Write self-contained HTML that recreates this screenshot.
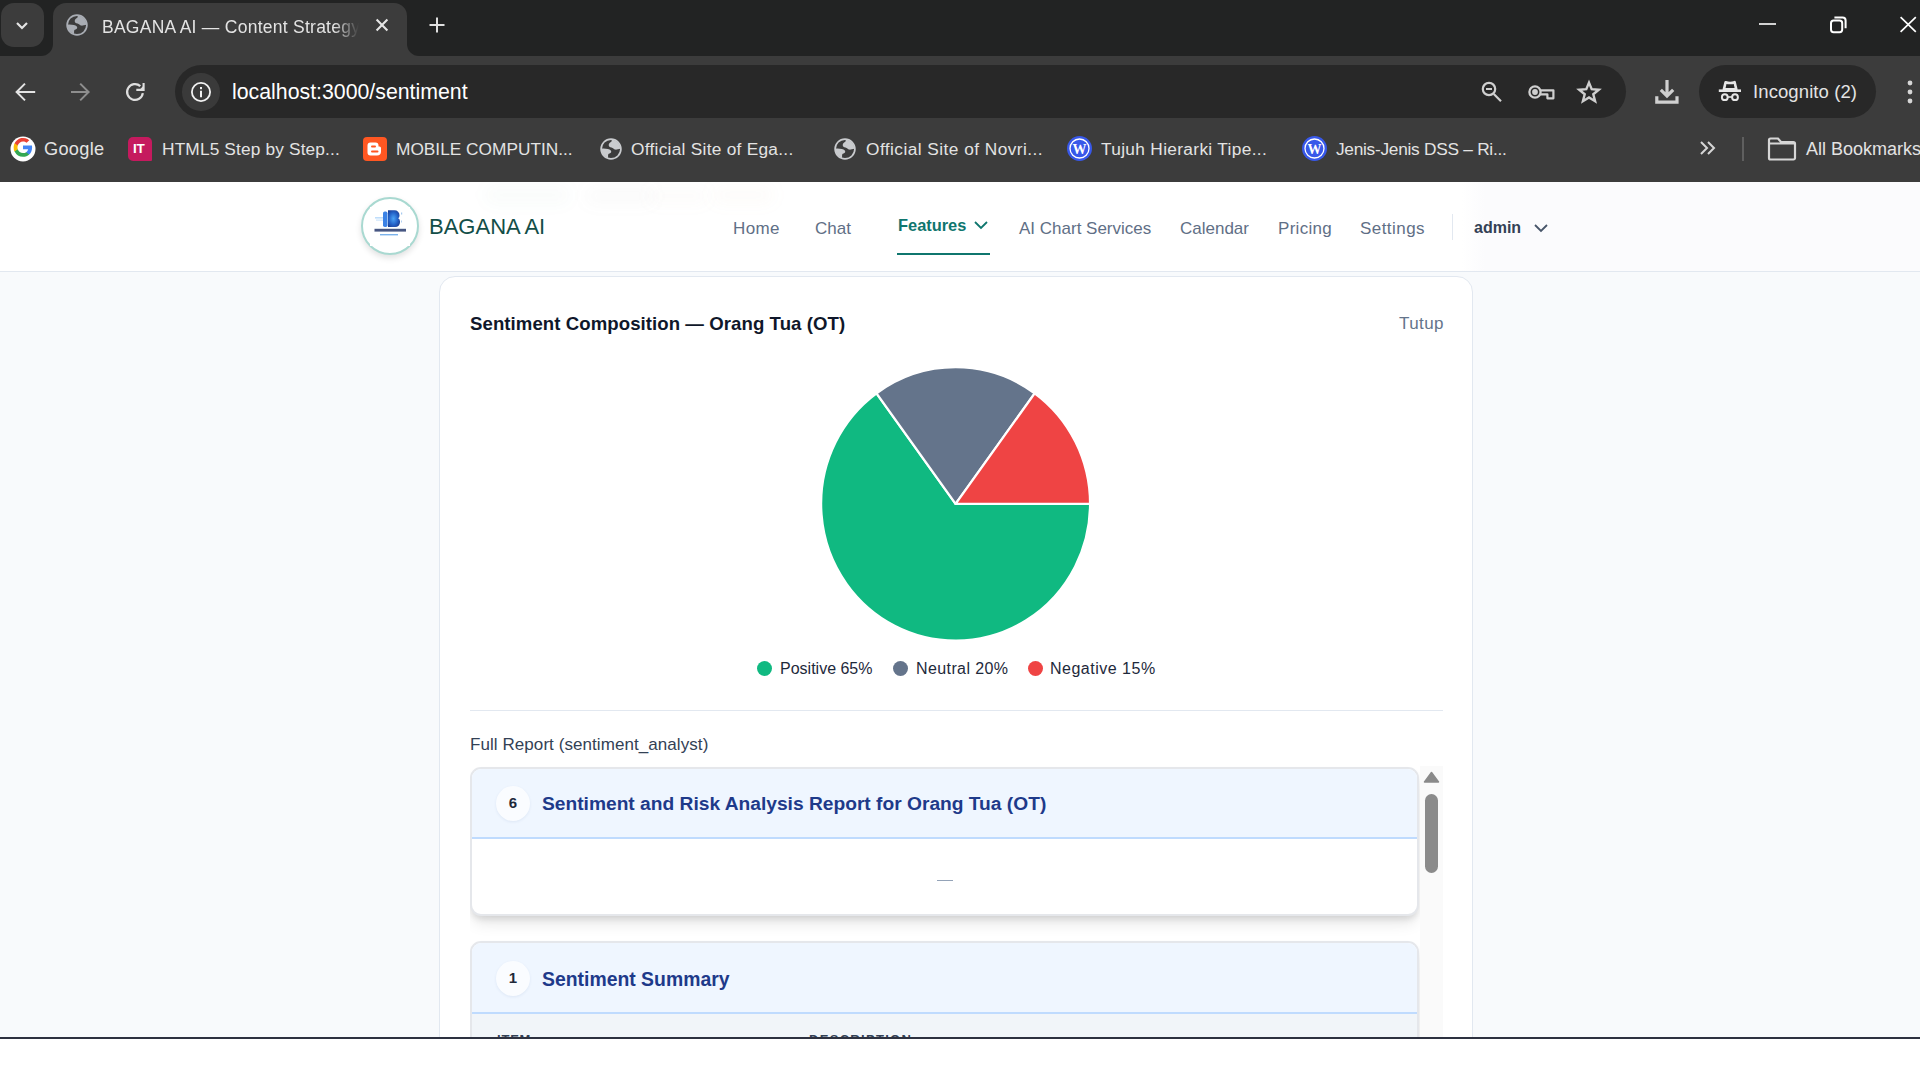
<!DOCTYPE html>
<html><head><meta charset="utf-8">
<style>
*{box-sizing:border-box;margin:0;padding:0}
html,body{width:1920px;height:1080px;overflow:hidden;background:#fff;font-family:"Liberation Sans",sans-serif}
.abs{position:absolute}
.nw{white-space:nowrap}
#frame{position:absolute;left:0;top:0;width:1920px;height:56px;background:#222323}
#toolbar{position:absolute;left:0;top:56px;width:1920px;height:126px;background:#3c3c3c}
.ct{color:#e3e3e3}
#page{position:absolute;left:0;top:182px;width:1920px;height:855px;background:#f8fafc;overflow:hidden}
</style></head><body>

<!-- ============ CHROME TAB STRIP ============ -->
<div id="frame"></div>
<div class="abs" style="left:1px;top:3px;width:43px;height:44px;border-radius:13px;background:#3c3c3c"></div>
<svg class="abs" style="left:12px;top:15px" width="20" height="20" viewBox="0 0 20 20"><path d="M5 8 L10 13 L15 8" fill="none" stroke="#e3e3e3" stroke-width="2.2"/></svg>

<!-- active tab -->
<div class="abs" style="left:53px;top:3px;width:354px;height:53px;border-radius:13px 13px 0 0;background:#3c3c3c"></div>
<div class="abs" style="left:41px;top:44px;width:12px;height:12px;background:#3c3c3c"></div>
<div class="abs" style="left:41px;top:44px;width:12px;height:12px;background:#222323;border-bottom-right-radius:12px"></div>
<div class="abs" style="left:407px;top:44px;width:12px;height:12px;background:#3c3c3c"></div>
<div class="abs" style="left:407px;top:44px;width:12px;height:12px;background:#222323;border-bottom-left-radius:12px"></div>

<svg class="abs" style="left:66px;top:14px" width="22" height="22" viewBox="0 0 22 22"><defs><clipPath id="gc1"><circle cx="11" cy="11" r="9.6"/></clipPath></defs><circle cx="11" cy="11" r="9.9" fill="none" stroke="#a9adb4" stroke-width="1.7"/><g clip-path="url(#gc1)" fill="#a9adb4"><path d="M11.7 0 L11.7 3.2 C10 4.5 8.7 5.5 8.7 6.9 C8.7 8.3 9.8 9.2 11.5 9.6 C13.2 10 13.6 11.4 15.3 11.6 C16.8 11.8 18.5 10.8 22 10.3 L22 0 Z"/><path d="M0 10.6 C3.5 10.6 7.5 10.8 9.5 11.5 C11 12.1 11.5 13.3 11 14.4 C10.5 15.3 8.6 15.2 8.2 16.5 C8 17.5 8.1 19 8.1 22 L0 22 Z"/></g></svg>
<div class="abs nw ct" style="left:102px;top:16px;font-size:17.5px;line-height:22px;letter-spacing:.26px;width:262px;overflow:hidden;-webkit-mask-image:linear-gradient(90deg,#000 232px,transparent 257px)">BAGANA AI — Content Strategy Hub</div>
<svg class="abs" style="left:374px;top:17px" width="16" height="16" viewBox="0 0 16 16"><path d="M2.6 2.6 L13.4 13.4 M13.4 2.6 L2.6 13.4" stroke="#e6e6e6" stroke-width="2.1"/></svg>
<svg class="abs" style="left:428px;top:16px" width="18" height="18" viewBox="0 0 18 18"><path d="M9 1.5 V16.5 M1.5 9 H16.5" stroke="#e0e0e0" stroke-width="2"/></svg>

<!-- window controls -->
<svg class="abs" style="left:1758px;top:14px" width="20" height="20" viewBox="0 0 20 20"><path d="M1 10 H18" stroke="#fff" stroke-width="1.6"/></svg>
<svg class="abs" style="left:1828px;top:14px" width="20" height="20" viewBox="0 0 20 20"><rect x="3" y="6.6" width="11.2" height="11.6" rx="2.6" fill="none" stroke="#fff" stroke-width="2"/><path d="M6.4 3.6 H14.6 a3 3 0 0 1 3 3 V14.2" fill="none" stroke="#fff" stroke-width="2"/></svg>
<svg class="abs" style="left:1898px;top:14px" width="20" height="20" viewBox="0 0 20 20"><path d="M2.6 3.2 L17.8 17.8 M17.8 3.2 L2.6 17.8" stroke="#fff" stroke-width="1.7"/></svg>

<!-- ============ TOOLBAR ============ -->
<div id="toolbar"></div>
<svg class="abs" style="left:13px;top:80px" width="24" height="24" viewBox="0 0 24 24"><path d="M22.2 12 H4.5 M12 3.6 L3.6 12 L12 20.4" fill="none" stroke="#e3e3e3" stroke-width="2"/></svg>
<svg class="abs" style="left:68px;top:80px" width="24" height="24" viewBox="0 0 24 24"><path d="M3 12 H20 M12.2 3.6 L20.6 12 L12.2 20.4" fill="none" stroke="#8e8e8e" stroke-width="2"/></svg>
<svg class="abs" style="left:123px;top:80px" width="24" height="24" viewBox="0 0 24 24"><path d="M17.29 6.13 A7.9 7.9 0 1 0 19.82 13.10" fill="none" stroke="#dedede" stroke-width="2.2"/><path d="M13.3 9.85 H20.6 V2.9" fill="none" stroke="#dedede" stroke-width="2.1"/><path d="M16.5 9.9 H20.6 V5.6 Z" fill="#dedede"/></svg>

<div class="abs" style="left:175px;top:65px;width:1451px;height:53px;border-radius:27px;background:#282828"></div>
<div class="abs" style="left:182px;top:73px;width:37.5px;height:37.5px;border-radius:50%;background:#3a3a3a"></div>
<svg class="abs" style="left:190px;top:81px" width="22" height="22" viewBox="0 0 22 22"><circle cx="11" cy="11" r="9.1" fill="none" stroke="#f2f2f2" stroke-width="1.8"/><path d="M11 9.8 V16.2" stroke="#f2f2f2" stroke-width="2"/><rect x="10" y="6" width="2" height="2.2" fill="#f2f2f2"/></svg>
<div class="abs nw" style="left:232px;top:79px;font-size:21.3px;line-height:26px;color:#fff">localhost:3000/sentiment</div>

<svg class="abs" style="left:1478px;top:79px" width="26" height="26" viewBox="0 0 26 26"><circle cx="11" cy="10" r="6.2" fill="none" stroke="#cfcfcf" stroke-width="2.2"/><path d="M8 10 H14 M15.8 15 L23 22.3" stroke="#cfcfcf" stroke-width="2.2"/></svg>
<svg class="abs" style="left:1527px;top:82px" width="30" height="20" viewBox="0 0 30 20"><circle cx="8" cy="10" r="5.6" fill="none" stroke="#cfcfcf" stroke-width="2.3"/><circle cx="8" cy="10" r="2.9" fill="#cfcfcf"/><path d="M13.6 8.3 H26.4 V16.3 H20.4 V12.3 H13.6" fill="none" stroke="#cfcfcf" stroke-width="2.2" stroke-linejoin="round"/></svg>
<svg class="abs" style="left:1576px;top:79px" width="26" height="26" viewBox="0 0 26 26"><path d="M13 3.6 L15.7 10.2 L22.8 10.7 L17.3 15.2 L19.1 22.2 L13 18.4 L6.9 22.2 L8.7 15.2 L3.2 10.7 L10.3 10.2 Z" fill="none" stroke="#cfcfcf" stroke-width="2.4" stroke-linejoin="miter"/></svg>

<svg class="abs" style="left:1654px;top:79px" width="26" height="26" viewBox="0 0 26 26"><path d="M13 1 V16.5 M6.8 10.8 L13 17 L19.2 10.8 M2.8 17.2 V23.2 H23 V17.2" fill="none" stroke="#d0d0d0" stroke-width="3.2"/></svg>

<div class="abs" style="left:1699px;top:65px;width:177px;height:53px;border-radius:27px;background:#282828"></div>
<svg class="abs" style="left:1717px;top:80px" width="26" height="24" viewBox="0 0 26 24"><path d="M8.6 2.2 Q13 3.8 17.6 2.2 L19.3 9.4 H6.9 Z" fill="none" stroke="#e6e6e6" stroke-width="2.6" stroke-linejoin="round"/><path d="M1.8 10.7 H24" stroke="#e6e6e6" stroke-width="2.6"/><circle cx="7.8" cy="17.2" r="2.9" fill="none" stroke="#e6e6e6" stroke-width="2"/><circle cx="18" cy="17.2" r="2.9" fill="none" stroke="#e6e6e6" stroke-width="2"/><path d="M10.7 17 H15.1" stroke="#e6e6e6" stroke-width="1.6"/></svg>
<div class="abs nw" style="left:1753px;top:80px;font-size:18.5px;line-height:24px;color:#e3e3e3;letter-spacing:.1px">Incognito (2)</div>
<svg class="abs" style="left:1903px;top:79px" width="14" height="26" viewBox="0 0 14 26"><circle cx="7" cy="4" r="2.4" fill="#d6d6d6"/><circle cx="7" cy="13" r="2.4" fill="#d6d6d6"/><circle cx="7" cy="22" r="2.4" fill="#d6d6d6"/></svg>

<!-- ============ BOOKMARKS ============ -->
<div id="bm">
<svg class="abs" style="left:9.5px;top:136px" width="26" height="26" viewBox="0 0 26 26"><circle cx="13" cy="13" r="12.5" fill="#fff"/><g transform="translate(13 13) scale(1.38) translate(-13 -14.3)">
<path d="M19.6 13.2 c0-.5-.05-1-.13-1.4 H13 v2.7 h3.7 a3.2 3.2 0 0 1-1.4 2.1 v1.7 h2.2 c1.3-1.2 2.1-3 2.1-5.1z" fill="#4285F4"/>
<path d="M13 20 c1.85 0 3.4-.6 4.5-1.7 l-2.2-1.7 c-.6.4-1.4.65-2.3.65 -1.8 0-3.3-1.2-3.8-2.8 H6.9 v1.75 A6.9 6.9 0 0 0 13 20z" fill="#34A853"/>
<path d="M9.2 14.45 a4.1 4.1 0 0 1 0-2.6 V10.1 H6.9 a6.9 6.9 0 0 0 0 6.1z" fill="#FBBC05"/>
<path d="M13 8.85 c1 0 1.9.35 2.6 1 l1.95-1.95 A6.9 6.9 0 0 0 6.9 10.1 l2.3 1.75 C9.7 10.1 11.2 8.85 13 8.85z" fill="#EA4335"/></g></svg>
<div class="abs nw ct" style="left:44px;top:138px;font-size:18.2px;letter-spacing:.3px;line-height:22px">Google</div>

<div class="abs" style="left:128px;top:137px;width:24px;height:24px;border-radius:5px 5px 1px 5px;background:#c51a5e"></div>
<div class="abs nw" style="left:133px;top:142px;font-size:13.5px;line-height:14px;font-weight:700;color:#fff;letter-spacing:-.3px">IT</div>
<div class="abs nw ct" style="left:162px;top:138px;font-size:17.3px;letter-spacing:.15px;line-height:22px">HTML5 Step by Step...</div>

<div class="abs" style="left:363px;top:137px;width:24px;height:24px;border-radius:4px;background:#ff5722"></div>
<svg class="abs" style="left:363px;top:137px" width="24" height="24" viewBox="0 0 24 24"><path d="M7.5 5.5 h5 a3 3 0 0 1 3 3 v1 h1 a1.5 1.5 0 0 1 1.5 1.5 v3.5 a4 4 0 0 1-4 4 h-6.5 a3 3 0 0 1-3-3 v-7 a3 3 0 0 1 3-3z" fill="#fff"/><rect x="8" y="8.5" width="5" height="2" rx="1" fill="#ff5722"/><rect x="8" y="13.5" width="7.5" height="2" rx="1" fill="#ff5722"/></svg>
<div class="abs nw ct" style="left:396px;top:138px;font-size:17.3px;line-height:22px">MOBILE COMPUTIN...</div>

<svg class="abs" style="left:599.5px;top:138px" width="22" height="22" viewBox="0 0 22 22"><defs><clipPath id="gc2"><circle cx="11" cy="11" r="9.6"/></clipPath></defs><circle cx="11" cy="11" r="9.9" fill="none" stroke="#c9cbce" stroke-width="1.7"/><g clip-path="url(#gc2)" fill="#c9cbce"><path d="M11.7 0 L11.7 3.2 C10 4.5 8.7 5.5 8.7 6.9 C8.7 8.3 9.8 9.2 11.5 9.6 C13.2 10 13.6 11.4 15.3 11.6 C16.8 11.8 18.5 10.8 22 10.3 L22 0 Z"/><path d="M0 10.6 C3.5 10.6 7.5 10.8 9.5 11.5 C11 12.1 11.5 13.3 11 14.4 C10.5 15.3 8.6 15.2 8.2 16.5 C8 17.5 8.1 19 8.1 22 L0 22 Z"/></g></svg>
<div class="abs nw ct" style="left:631px;top:138px;font-size:17.3px;letter-spacing:.27px;line-height:22px">Official Site of Ega...</div>

<svg class="abs" style="left:833.5px;top:138px" width="22" height="22" viewBox="0 0 22 22"><defs><clipPath id="gc3"><circle cx="11" cy="11" r="9.6"/></clipPath></defs><circle cx="11" cy="11" r="9.9" fill="none" stroke="#c9cbce" stroke-width="1.7"/><g clip-path="url(#gc3)" fill="#c9cbce"><path d="M11.7 0 L11.7 3.2 C10 4.5 8.7 5.5 8.7 6.9 C8.7 8.3 9.8 9.2 11.5 9.6 C13.2 10 13.6 11.4 15.3 11.6 C16.8 11.8 18.5 10.8 22 10.3 L22 0 Z"/><path d="M0 10.6 C3.5 10.6 7.5 10.8 9.5 11.5 C11 12.1 11.5 13.3 11 14.4 C10.5 15.3 8.6 15.2 8.2 16.5 C8 17.5 8.1 19 8.1 22 L0 22 Z"/></g></svg>
<div class="abs nw ct" style="left:866px;top:138px;font-size:17.3px;letter-spacing:.45px;line-height:22px">Official Site of Novri...</div>

<svg class="abs" style="left:1067px;top:136px" width="25" height="25" viewBox="0 0 25 25"><circle cx="12.5" cy="12.5" r="12.5" fill="#3858e9"/><circle cx="12.5" cy="12.5" r="9.5" fill="none" stroke="#fff" stroke-width="1.3"/><text x="12.5" y="17.5" text-anchor="middle" font-family="Liberation Serif" font-weight="700" font-size="14" fill="#fff">W</text></svg>
<div class="abs nw ct" style="left:1101px;top:138px;font-size:17.3px;letter-spacing:.33px;line-height:22px">Tujuh Hierarki Tipe...</div>

<svg class="abs" style="left:1302px;top:136px" width="25" height="25" viewBox="0 0 25 25"><circle cx="12.5" cy="12.5" r="12.5" fill="#3858e9"/><circle cx="12.5" cy="12.5" r="9.5" fill="none" stroke="#fff" stroke-width="1.3"/><text x="12.5" y="17.5" text-anchor="middle" font-family="Liberation Serif" font-weight="700" font-size="14" fill="#fff">W</text></svg>
<div class="abs nw ct" style="left:1336px;top:138px;font-size:17.3px;letter-spacing:-.27px;line-height:22px">Jenis-Jenis DSS – Ri...</div>

<svg class="abs" style="left:1699px;top:140px" width="18" height="16" viewBox="0 0 18 16"><path d="M2 2 L8 8 L2 14 M9 2 L15 8 L9 14" fill="none" stroke="#d6d6d6" stroke-width="2"/></svg>
<div class="abs" style="left:1742px;top:137px;width:2px;height:24px;background:#5f5f5f"></div>
<svg class="abs" style="left:1767px;top:137px" width="30" height="24" viewBox="0 0 30 24"><path d="M2 3 a1.5 1.5 0 0 1 1.5-1.5 H11 L14 5 H26.5 a1.5 1.5 0 0 1 1.5 1.5 V21 a1.5 1.5 0 0 1-1.5 1.5 H3.5 A1.5 1.5 0 0 1 2 21 Z M2 6.5 H28" fill="none" stroke="#d6d6d6" stroke-width="2.2"/></svg>
<div class="abs nw ct" style="left:1806px;top:138px;font-size:18px;line-height:22px">All Bookmarks</div>
</div>

<!-- ============ PAGE ============ -->
<div id="page">
<!-- header -->
<div class="abs" style="left:0;top:0;width:1920px;height:90px;background:linear-gradient(90deg,#fff 0,#fff 1462px,#fbfbfd 1485px,#fbfbfd 100%);border-bottom:1px solid #e2e8f0"></div>
<div class="abs" style="left:485px;top:5px;width:85px;height:16px;border-radius:8px;background:rgba(16,120,100,.03);filter:blur(8px)"></div>
<div class="abs" style="left:585px;top:6px;width:70px;height:16px;border-radius:8px;background:rgba(100,120,110,.035);filter:blur(8px)"></div>
<div class="abs" style="left:648px;top:7px;width:60px;height:14px;border-radius:8px;background:rgba(180,140,110,.035);filter:blur(8px)"></div>
<div class="abs" style="left:712px;top:5px;width:62px;height:16px;border-radius:8px;background:rgba(210,150,100,.04);filter:blur(8px)"></div>
<div class="abs" style="left:361px;top:15px;width:58px;height:58px;border-radius:50%;background:#fff;border:2px solid #a9d9d1;box-shadow:0 3px 6px rgba(0,0,0,.12)"></div>
<div class="abs" style="left:370px;top:25px;width:40px;height:39px;background:#fff"></div>
<svg class="abs" style="left:370px;top:25px" width="40" height="40" viewBox="0 0 40 40">
<defs><radialGradient id="lg" cx="45%" cy="50%" r="60%"><stop offset="0" stop-color="#4aa3f5"/><stop offset=".6" stop-color="#2563c9"/><stop offset="1" stop-color="#1d3f94"/></radialGradient>
<filter id="lb" x="-20%" y="-20%" width="140%" height="140%"><feGaussianBlur stdDeviation=".45"/></filter></defs>
<g filter="url(#lb)">
<rect x="5" y="10" width="8" height="1.6" fill="#8cc3f7" opacity=".55"/>
<rect x="6" y="12.5" width="7" height="1.2" fill="#8cc3f7" opacity=".45"/>
<rect x="13" y="4.5" width="4.5" height="15.5" rx="1.8" fill="#3b82e6"/>
<path d="M18 3.2 h6.5 a5 5 0 0 1 5 5 v.5 a3.2 3.2 0 0 1 -1.3 2.6 a3.6 3.6 0 0 1 1.8 3.2 v.8 a4.8 4.8 0 0 1 -4.8 4.8 h-7.2z" fill="url(#lg)"/>
<rect x="31" y="5.5" width="1.2" height="2" fill="#7fb3ea" opacity=".7"/>
<rect x="31" y="13.5" width="1" height="2" fill="#7fb3ea" opacity=".6"/>
<rect x="4.5" y="21.8" width="31.5" height="2.8" fill="#172a63" opacity=".8"/>
<rect x="10" y="27" width="18" height="1.4" fill="#5b9fe6" opacity=".8"/>
</g></svg>
<div class="abs nw" style="left:429px;top:31px;font-size:22px;line-height:28px;color:#134e48">BAGANA AI</div>

<div class="abs nw" style="left:733px;top:35.5px;font-size:17px;line-height:22px;color:#5f6f86;letter-spacing:.4px">Home</div>
<div class="abs nw" style="left:815px;top:35.5px;font-size:17px;line-height:22px;color:#5f6f86">Chat</div>
<div class="abs nw" style="left:898px;top:32px;font-size:16.4px;line-height:22px;color:#0f766e;font-weight:700">Features</div>
<svg class="abs" style="left:973px;top:37px" width="16" height="12" viewBox="0 0 16 12"><path d="M2 3 L8 9 L14 3" fill="none" stroke="#0f766e" stroke-width="1.8"/></svg>
<div class="abs" style="left:897px;top:71px;width:93px;height:2px;background:#0f766e"></div>
<div class="abs nw" style="left:1019px;top:35.5px;font-size:17px;line-height:22px;color:#5f6f86">AI Chart Services</div>
<div class="abs nw" style="left:1180px;top:35.5px;font-size:17px;line-height:22px;color:#5f6f86">Calendar</div>
<div class="abs nw" style="left:1278px;top:35.5px;font-size:17px;line-height:22px;color:#5f6f86;letter-spacing:.3px">Pricing</div>
<div class="abs nw" style="left:1360px;top:35.5px;font-size:17px;line-height:22px;color:#5f6f86;letter-spacing:.45px">Settings</div>
<div class="abs" style="left:1452px;top:32px;width:1px;height:26px;background:#e2e8f0"></div>
<div class="abs nw" style="left:1474px;top:35px;font-size:16px;line-height:22px;color:#334155;font-weight:700">admin</div>
<svg class="abs" style="left:1533px;top:40px" width="16" height="12" viewBox="0 0 16 12"><path d="M2 3 L8 9 L14 3" fill="none" stroke="#475569" stroke-width="1.8"/></svg>

<!-- card -->
<div class="abs" style="left:439px;top:94px;width:1034px;height:900px;background:#fff;border:1px solid #e2e8f0;border-radius:16px"></div>
<div class="abs nw" style="left:470px;top:131px;font-size:18.6px;line-height:22px;color:#0f172a;font-weight:700;letter-spacing:.07px">Sentiment Composition — Orang Tua (OT)</div>
<div class="abs nw" style="left:1399px;top:131px;font-size:17px;line-height:22px;color:#64748b;letter-spacing:.4px">Tutup</div>

<svg class="abs" style="left:815px;top:182px" width="280" height="280" viewBox="0 0 280 280">
<g stroke="#fff" stroke-width="2.3" stroke-linejoin="round">
<path d="M140.6 139.9 L275.10 139.90 A134.5 136.7 0 1 1 61.54 29.31 Z" fill="#10b981"/>
<path d="M140.6 139.9 L61.54 29.31 A134.5 136.7 0 0 1 219.66 29.31 Z" fill="#64748b"/>
<path d="M140.6 139.9 L219.66 29.31 A134.5 136.7 0 0 1 275.10 139.90 Z" fill="#ef4444"/>
</g></svg>

<div class="abs" style="left:757px;top:479px;width:15px;height:15px;border-radius:50%;background:#10b981"></div>
<div class="abs nw" style="left:780px;top:476px;font-size:16px;line-height:22px;color:#1e293b">Positive 65%</div>
<div class="abs" style="left:893px;top:479px;width:15px;height:15px;border-radius:50%;background:#64748b"></div>
<div class="abs nw" style="left:916px;top:476px;font-size:16px;letter-spacing:.4px;line-height:22px;color:#1e293b">Neutral 20%</div>
<div class="abs" style="left:1028px;top:479px;width:15px;height:15px;border-radius:50%;background:#ef4444"></div>
<div class="abs nw" style="left:1050px;top:476px;font-size:16px;letter-spacing:.5px;line-height:22px;color:#1e293b">Negative 15%</div>

<div class="abs" style="left:470px;top:528px;width:973px;height:1px;background:#e2e8f0"></div>
<div class="abs nw" style="left:470px;top:552px;font-size:17px;letter-spacing:.07px;line-height:22px;color:#334155">Full Report (sentiment_analyst)</div>

<!-- scroll area -->
<div class="abs" style="left:1420px;top:584px;width:23px;height:300px;background:#fafafa"></div>
<svg class="abs" style="left:1423px;top:589px" width="17" height="13" viewBox="0 0 17 13"><path d="M8.5 1.5 L15.5 11 H1.5 Z" fill="#8a8a8a" stroke="#8a8a8a" stroke-width="1.5" stroke-linejoin="round"/></svg>
<div class="abs" style="left:1425px;top:612px;width:13px;height:79px;border-radius:7px;background:#8b8b8b"></div>

<div class="abs" style="left:470px;top:584px;width:950px;height:300px;overflow:hidden">
<div class="abs" style="left:0;top:1px;width:949px;height:149px;background:#fff;border:2px solid #e5e7eb;border-radius:11px;box-shadow:0 4px 6px -1px rgba(0,0,0,.1),0 10px 15px -3px rgba(0,0,0,.1);overflow:hidden">
  <div class="abs" style="left:0;top:0;width:949px;height:70px;background:#eff6ff;border-bottom:2px solid #bfdbfe"></div>
  <div class="abs" style="left:24px;top:16.5px;width:34px;height:35px;border-radius:50%;background:#fafcff;box-shadow:0 1px 3px rgba(30,58,138,.08)"></div>
  <div class="abs nw" style="left:24px;top:26px;width:34px;text-align:center;font-size:15px;line-height:16px;font-weight:700;color:#1e293b">6</div>
  <div class="abs nw" style="left:70px;top:23px;font-size:19.2px;line-height:24px;font-weight:700;color:#1e3a8a">Sentiment and Risk Analysis Report for Orang Tua (OT)</div>
  <div class="abs" style="left:465px;top:111px;width:16px;height:1px;background:#94a3b8"></div>
</div>
<div class="abs" style="left:0;top:175px;width:949px;height:300px;background:#fff;border:2px solid #e5e7eb;border-radius:11px;box-shadow:0 4px 6px -1px rgba(0,0,0,.1),0 10px 15px -3px rgba(0,0,0,.1);overflow:hidden">
  <div class="abs" style="left:0;top:0;width:949px;height:71px;background:#eff6ff;border-bottom:2px solid #bfdbfe"></div>
  <div class="abs" style="left:24px;top:17.5px;width:34px;height:35px;border-radius:50%;background:#fafcff;box-shadow:0 1px 3px rgba(30,58,138,.08)"></div>
  <div class="abs nw" style="left:24px;top:27px;width:34px;text-align:center;font-size:15px;line-height:16px;font-weight:700;color:#1e293b">1</div>
  <div class="abs nw" style="left:70px;top:23.5px;font-size:19.4px;line-height:24px;font-weight:700;color:#1e3a8a">Sentiment Summary</div>
  <div class="abs" style="left:0;top:71px;width:949px;height:200px;background:#f1f5f9"></div>
  <div class="abs nw" style="left:25px;top:89px;font-size:13px;line-height:16px;font-weight:700;color:#334155;letter-spacing:.8px">ITEM</div>
  <div class="abs nw" style="left:337px;top:89px;font-size:13px;line-height:16px;font-weight:700;color:#334155;letter-spacing:1.3px">DESCRIPTION</div>
</div>
</div>
</div>

<div class="abs" style="left:0;top:1037px;width:1920px;height:2px;background:#2d3140"></div>
</body></html>
